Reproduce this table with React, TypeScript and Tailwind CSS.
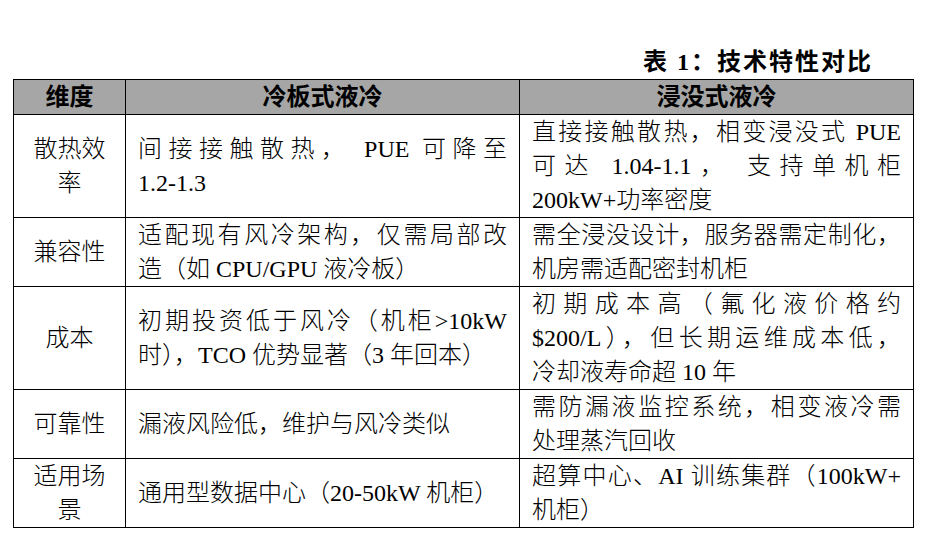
import React from "react";

/* ---------------------------- table data ---------------------------- */
type Row = {
  dim: string[];
  cold: string[];
  immersion: string[];
};

const rows: Row[] = [
  {
    dim: ["散热效", "率"],
    cold: ["间接接触散热， PUE 可降至", "1.2-1.3"],
    immersion: ["直接接触散热，相变浸没式 PUE", "可达 1.04-1.1， 支持单机柜", "200kW+功率密度"],
  },
  {
    dim: ["兼容性"],
    cold: ["适配现有风冷架构，仅需局部改", "造（如 CPU/GPU 液冷板）"],
    immersion: ["需全浸没设计，服务器需定制化，", "机房需适配密封机柜"],
  },
  {
    dim: ["成本"],
    cold: ["初期投资低于风冷（机柜>10kW", "时），TCO 优势显著（3 年回本）"],
    immersion: ["初期成本高（氟化液价格约", "$200/L），但长期运维成本低，", "冷却液寿命超 10 年"],
  },
  {
    dim: ["可靠性"],
    cold: ["漏液风险低，维护与风冷类似"],
    immersion: ["需防漏液监控系统，相变液冷需", "处理蒸汽回收"],
  },
  {
    dim: ["适用场", "景"],
    cold: ["通用型数据中心（20-50kW 机柜）"],
    immersion: ["超算中心、AI 训练集群（100kW+", "机柜）"],
  },
];

/* ------------------------------ helpers ----------------------------- */
// every line but the last one is justified, as Word does it
function Lines({ lines }: { lines: string[] }) {
  return (
    <div className="w-full">
      {lines.map((l, i) => (
        <div
          key={i}
          className={
            i < lines.length - 1
              ? "h-[34px] whitespace-nowrap text-justify [text-align-last:justify]"
              : "h-[34px] whitespace-nowrap"
          }
        >
          {l}
        </div>
      ))}
    </div>
  );
}

export default function App() {
  return (
    <div
      lang="zh-CN"
      className="w-[937px] h-[555px] bg-white text-black pt-[45px] pl-[13px]"
      style={{ fontFamily: '"Liberation Serif", "Noto Sans CJK SC", serif' }}
    >
      {/* ---------- caption ---------- */}
      <div className="w-[901px] pr-[41px] text-right text-[24px] leading-[34px] font-bold tracking-[2px]">
        表 1：技术特性对比
      </div>

      {/* ---------- table ---------- */}
      <div className="grid w-[901px] grid-cols-[112px_394px_394px] border-l border-t border-black text-[24px] leading-[34px] font-light">
        <div className="flex items-center justify-center border-r border-b border-black bg-[#a6a6a6] font-bold">
          维度
        </div>
        <div className="flex items-center justify-center border-r border-b border-black bg-[#a6a6a6] font-bold">
          冷板式液冷
        </div>
        <div className="flex items-center justify-center border-r border-b border-black bg-[#a6a6a6] font-bold">
          浸没式液冷
        </div>

        {rows.map((r, idx) => (
          <React.Fragment key={idx}>
            <div className="flex flex-col items-center justify-center border-r border-b border-black">
              {r.dim.map((d, i) => (
                <div key={i} className="h-[34px]">
                  {d}
                </div>
              ))}
            </div>
            <div className="flex items-center border-r border-b border-black px-3">
              <Lines lines={r.cold} />
            </div>
            <div className="flex items-center border-r border-b border-black px-3">
              <Lines lines={r.immersion} />
            </div>
          </React.Fragment>
        ))}
      </div>
    </div>
  );
}
